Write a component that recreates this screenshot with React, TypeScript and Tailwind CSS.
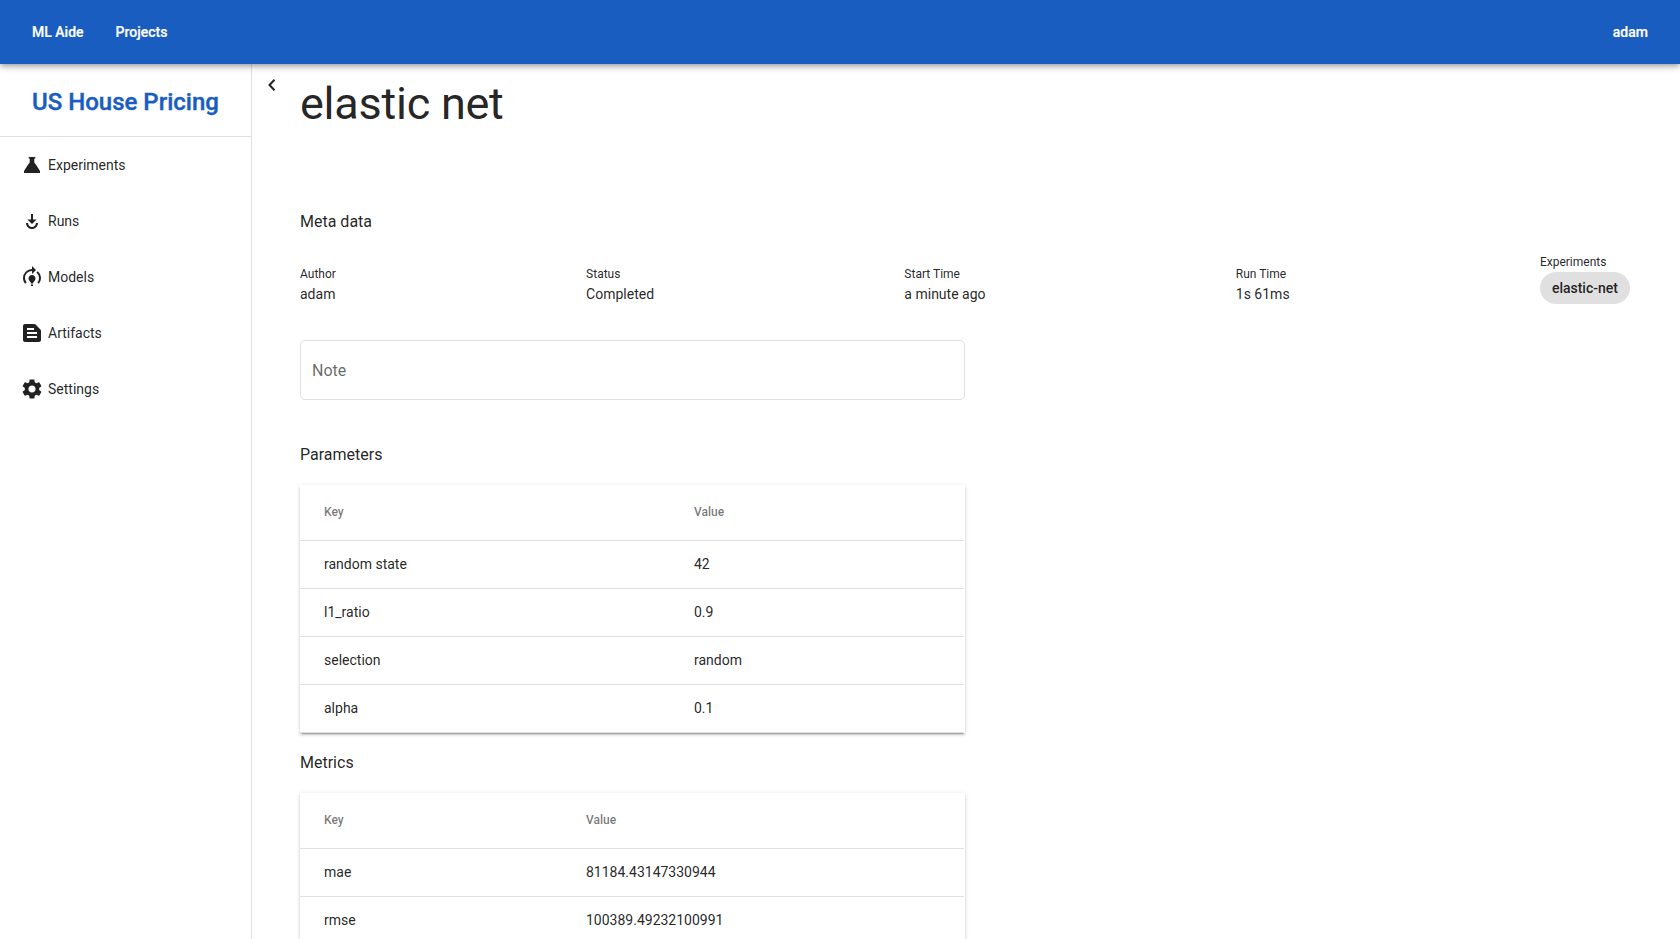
import { MdModelTraining, MdPlayForWork, MdSettings, MdTextSnippet } from "react-icons/md";
import type { ReactNode } from "react";

function Flask() {
  return (
    <svg viewBox="0 0 24 24" className="size-6" fill="currentColor">
      <path d="M8.700 4h6.600v1.500h-1v4l1.900 2.600L20 18v2H4v-2l3.800-5.900L9.700 9.500v-4h-1z" />
    </svg>
  );
}

const nav: { label: string; icon: ReactNode }[] = [
  { label: "Experiments", icon: <Flask /> },
  { label: "Runs", icon: <MdPlayForWork size={24} /> },
  { label: "Models", icon: <MdModelTraining size={24} /> },
  { label: "Artifacts", icon: <MdTextSnippet size={24} /> },
  { label: "Settings", icon: <MdSettings size={24} /> },
];

const meta = [
  { label: "Author", value: "adam" },
  { label: "Status", value: "Completed" },
  { label: "Start Time", value: "a minute ago" },
  { label: "Run Time", value: "1s 61ms" },
];

function DataTable({ rows, keyWidth }: { rows: string[][]; keyWidth: string }) {
  return (
    <div className="w-[665px] bg-white pr-px shadow-[0_3px_1px_-2px_rgba(0,0,0,0.2),0_2px_2px_0_rgba(0,0,0,0.14),0_1px_5px_0_rgba(0,0,0,0.12)]">
      <div className="flex h-14 items-center border-b border-black/12 pb-0.5 pl-6 text-xs font-medium text-black/54">
        <div className={keyWidth}>Key</div>
        <div>Value</div>
      </div>
      {rows.map(([k, v]) => (
        <div key={k} className="flex h-12 items-center border-b border-black/12 pb-0.5 pl-6 text-sm">
          <div className={keyWidth}>{k}</div>
          <div>{v}</div>
        </div>
      ))}
    </div>
  );
}

export default function App() {
  return (
    <div className="flex h-[939px] flex-col overflow-hidden bg-white font-['Roboto',sans-serif] text-black/87">
      <header className="z-10 flex h-16 shrink-0 items-center gap-8 bg-[#1a5dc0] px-8 text-sm font-medium text-white shadow-[0_2px_4px_-1px_rgba(0,0,0,0.2),0_4px_5px_0_rgba(0,0,0,0.14),0_1px_10px_0_rgba(0,0,0,0.12)] [-webkit-text-stroke:0.2px]">
        <span>ML Aide</span>
        <span>Projects</span>
        <span className="ml-auto">adam</span>
      </header>
      <div className="flex min-h-0 flex-1">
        <aside className="w-[252px] shrink-0 border-r border-black/12">
          <h2 className="flex h-[73px] items-center border-b border-black/12 pl-8 pt-1 text-2xl font-medium text-[#1a5dc0] [-webkit-text-stroke:0.4px]">
            US House Pricing
          </h2>
          <nav>
            {nav.map((n) => (
              <a key={n.label} className="flex h-14 items-center gap-1 pl-5 text-sm">
                {n.icon}
                {n.label}
              </a>
            ))}
          </nav>
        </aside>
        <main className="flex min-w-0 flex-1">
          <div className="w-12 shrink-0 pl-[15px] pt-[15px]">
            <svg viewBox="0 0 12 12" className="h-3 w-3" fill="none" stroke="currentColor" strokeWidth="2">
              <path d="M7.500 0.800L2.500 6l5 5.200" />
            </svg>
          </div>
          <div className="w-[1330px] shrink-0">
            <h1 className="pt-3 text-[45px] leading-[56px] tracking-[-0.25px]">elastic net</h1>
            <h3 className="mt-[78px] text-base leading-6">Meta data</h3>
            <div className="mt-[18px] flex items-center justify-between">
              {meta.map((m) => (
                <div key={m.label} className="pt-3">
                  <div className="text-xs leading-5">{m.label}</div>
                  <div className="text-sm leading-5">{m.value}</div>
                </div>
              ))}
              <div>
                <div className="text-xs leading-5">Experiments</div>
                <div className="flex h-8 items-center rounded-full bg-[#e0e0e0] px-3 text-sm font-medium">elastic-net</div>
              </div>
            </div>
            <div className="mt-9 flex h-[60px] w-[665px] items-center rounded-[5px] border border-black/12 pl-[11px] pt-0.5 text-base text-black/60">
              Note
            </div>
            <h3 className="mb-[18px] mt-[43px] text-base leading-6">Parameters</h3>
            <DataTable
              keyWidth="w-[370px]"
              rows={[
                ["random state", "42"],
                ["l1_ratio", "0.9"],
                ["selection", "random"],
                ["alpha", "0.1"],
              ]}
            />
            <h3 className="mb-[18px] mt-[18px] text-base leading-6">Metrics</h3>
            <DataTable
              keyWidth="w-[262px]"
              rows={[
                ["mae", "81184.43147330944"],
                ["rmse", "100389.49232100991"],
              ]}
            />
          </div>
        </main>
      </div>
    </div>
  );
}
